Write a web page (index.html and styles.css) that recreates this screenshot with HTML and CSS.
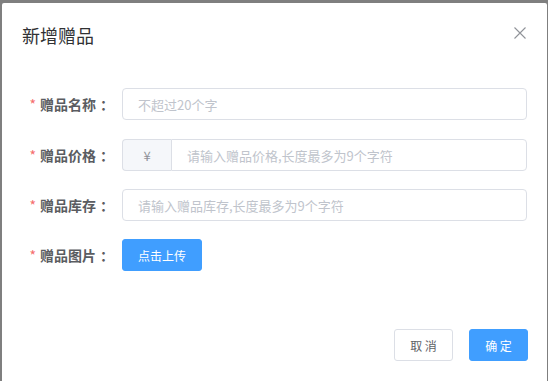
FILE: index.html
```html
<!DOCTYPE html>
<html lang="zh-CN">
<head>
<meta charset="utf-8">
<title>新增赠品</title>
<link rel="stylesheet" href="styles.css">
</head>
<body>
<div class="dialog">
  <div class="dialog-header">
    <span class="dialog-title">新增赠品</span>
    <button class="close-btn" aria-label="关闭">
      <svg width="12" height="12" viewBox="0 0 12 12"><path d="M0.5 0.5 L11.5 11.5 M11.5 0.5 L0.5 11.5" stroke="#909399" stroke-width="1.1" fill="none"/></svg>
    </button>
  </div>
  <div class="dialog-body">
    <form class="form">
      <div class="form-item">
        <label class="form-label"><span class="req">*</span>赠品名称<span class="colon">：</span></label>
        <div class="form-content">
          <div class="input"><span class="placeholder">不超过20个字</span></div>
        </div>
      </div>
      <div class="form-item">
        <label class="form-label"><span class="req">*</span>赠品价格<span class="colon">：</span></label>
        <div class="form-content">
          <div class="input-group">
            <div class="prepend">¥</div>
            <div class="input grouped"><span class="placeholder">请输入赠品价格,长度最多为9个字符</span></div>
          </div>
        </div>
      </div>
      <div class="form-item">
        <label class="form-label"><span class="req">*</span>赠品库存<span class="colon">：</span></label>
        <div class="form-content">
          <div class="input"><span class="placeholder">请输入赠品库存,长度最多为9个字符</span></div>
        </div>
      </div>
      <div class="form-item">
        <label class="form-label"><span class="req">*</span>赠品图片<span class="colon">：</span></label>
        <div class="form-content">
          <button type="button" class="btn btn-primary">点击上传</button>
        </div>
      </div>
    </form>
  </div>
  <div class="dialog-footer">
    <button type="button" class="btn btn-default">取 消</button>
    <button type="button" class="btn btn-primary">确 定</button>
  </div>
</div>
</body>
</html>
```
FILE: styles.css
```css
html, body {
  margin: 0;
  padding: 0;
}
body {
  background: #7f7f7f;
  width: 548px;
  height: 381px;
  overflow: hidden;
  font-family: "Noto Sans CJK SC", "Liberation Sans", sans-serif;
}
.dialog {
  margin: 3px 1px 0 2px;
  background: #fff;
  height: 378px;
  border-radius: 2px 2px 0 0;
}
.dialog-header {
  position: relative;
  padding: 20px 20px 10px 20px;
}
.dialog-title {
  display: block;
  font-size: 18px;
  line-height: 24px;
  color: #303133;
}
.close-btn {
  position: absolute;
  top: 24px;
  right: 21px;
  width: 12px;
  height: 12px;
  padding: 0;
  border: 0;
  background: none;
  display: flex;
}
.dialog-body {
  padding: 31px 20px 30px 20px;
}
.form-item {
  display: flex;
  margin-bottom: 18px;
}
.form-item:first-child {
  margin-bottom: 19px;
}
.form-item:last-child {
  margin-bottom: 0;
}
.form-label {
  width: 100px;
  box-sizing: border-box;
  padding-right: 12px;
  text-align: right;
  font-size: 14px;
  line-height: 32px;
  font-weight: bold;
  color: #5a5c61;
  white-space: nowrap;
}
.colon {
  display: inline-block;
  width: 14px;
  padding-left: 4px;
  box-sizing: border-box;
  text-align: left;
}
.req {
  color: #f56c6c;
  margin-right: 4px;
  font-weight: normal;
}
.form-content {
  flex: 1;
}
.input {
  height: 32px;
  box-sizing: border-box;
  border: 1px solid #dcdfe6;
  border-radius: 4px;
  padding: 0 15px;
  display: flex;
  align-items: center;
  font-size: 13px;
}
.placeholder {
  color: #c0c4cc;
}
.input-group {
  display: flex;
}
.prepend {
  width: 49px;
  height: 32px;
  box-sizing: border-box;
  border: 1px solid #dcdfe6;
  border-right: 0;
  border-radius: 4px 0 0 4px;
  background: #f5f7fa;
  color: #909399;
  font-size: 13px;
  display: flex;
  align-items: center;
  justify-content: center;
}
.input.grouped {
  flex: 1;
  border-radius: 0 4px 4px 0;
}
.btn {
  height: 32px;
  box-sizing: border-box;
  padding: 0 15px;
  border-radius: 3px;
  font-family: inherit;
  font-size: 12px;
  cursor: pointer;
}
.btn-primary {
  background: #409eff;
  border: 1px solid #409eff;
  color: #fff;
}
.btn-default {
  background: #fff;
  border: 1px solid #dcdfe6;
  color: #606266;
}
.dialog-footer {
  display: flex;
  justify-content: flex-end;
  gap: 16px;
  padding: 28px 19px 20px 20px;
}
.dialog-footer .btn {
  width: 59px;
  padding: 0;
}
```
